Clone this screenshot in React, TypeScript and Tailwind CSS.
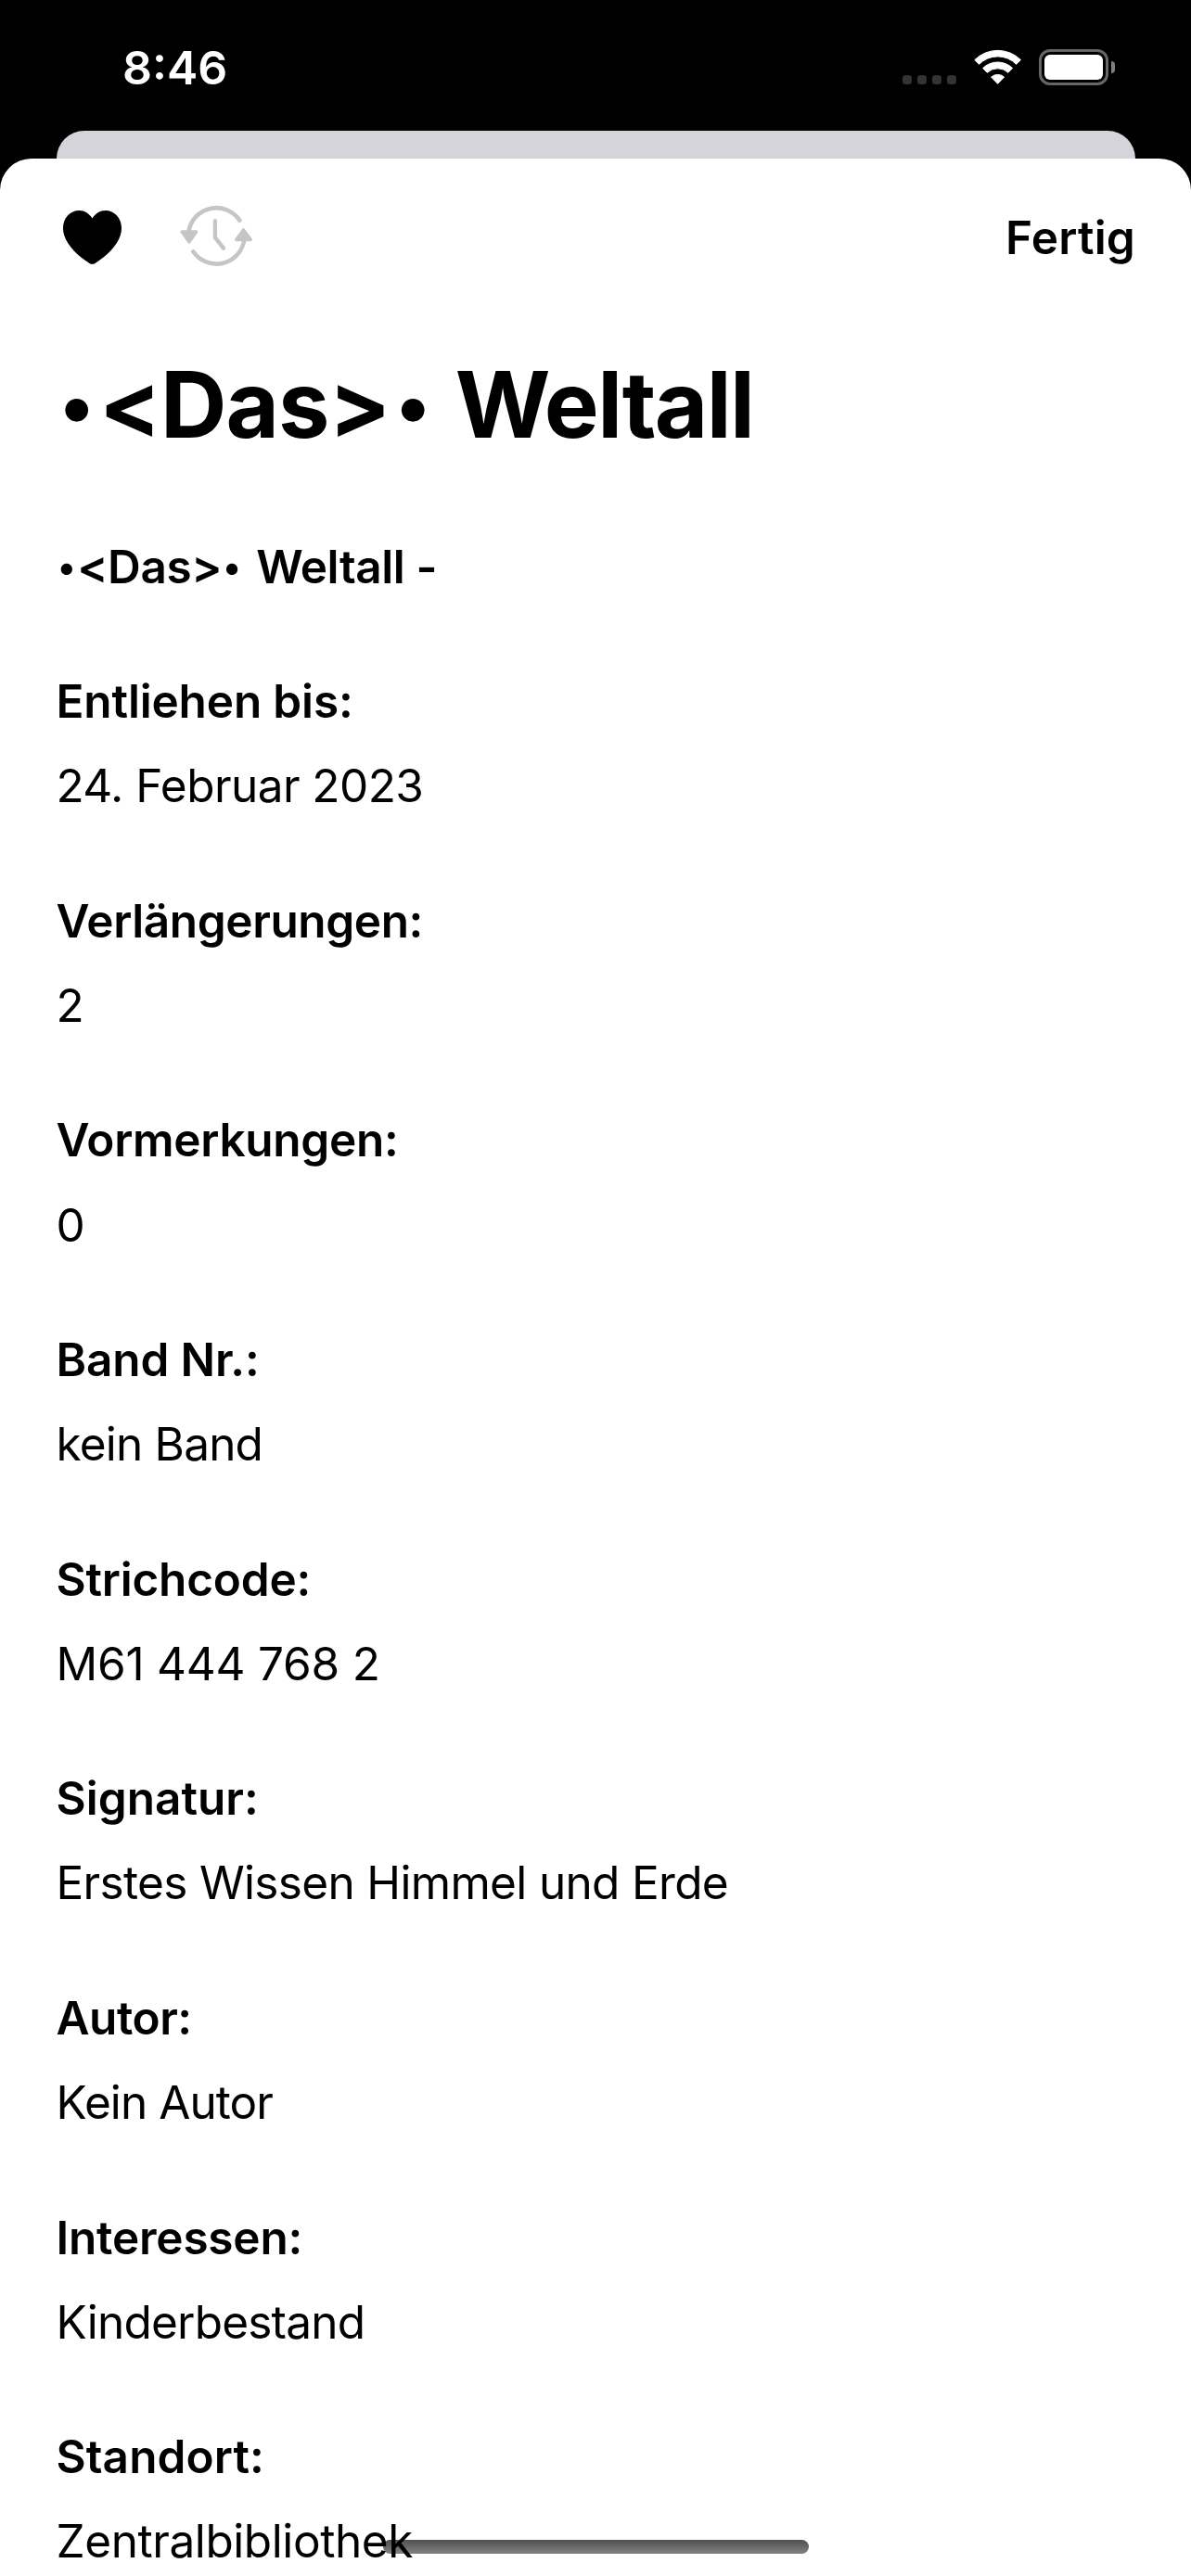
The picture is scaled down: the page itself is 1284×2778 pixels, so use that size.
type Entry = {
  label: string;
  value: string;
  labelClass: string;
  valueClass: string;
};

const entries: Entry[] = [
  { label: "Entliehen bis:", value: "24. Februar 2023", labelClass: "tracking-[-0.15px]", valueClass: "tracking-[-0.56px]" },
  { label: "Verlängerungen:", value: "2", labelClass: "tracking-[-0.39px]", valueClass: "tracking-normal" },
  { label: "Vormerkungen:", value: "0", labelClass: "tracking-[-0.3px]", valueClass: "tracking-normal" },
  { label: "Band Nr.:", value: "kein Band", labelClass: "tracking-[-0.15px]", valueClass: "tracking-[-0.8px]" },
  { label: "Strichcode:", value: "M61 444 768 2", labelClass: "tracking-[-0.2px]", valueClass: "tracking-[-0.22px]" },
  { label: "Signatur:", value: "Erstes Wissen Himmel und Erde", labelClass: "tracking-[0.02px]", valueClass: "tracking-[-0.67px]" },
  { label: "Autor:", value: "Kein Autor", labelClass: "tracking-[-0.45px]", valueClass: "tracking-[-0.92px]" },
  { label: "Interessen:", value: "Kinderbestand", labelClass: "tracking-[-0.2px]", valueClass: "tracking-[-0.78px]" },
  { label: "Standort:", value: "Zentralbibliothek", labelClass: "tracking-[0.1px]", valueClass: "tracking-[-0.42px]" },
];

function WifiIcon() {
  return (
    <svg
      className="h-[39px] w-[53px]"
      viewBox="1049 53 53 39"
      fill="#fff"
      stroke="#fff"
      strokeWidth="1"
      strokeLinejoin="round"
    >
      <path d="M1050.8 64.6A35.2 35.2 0 0 1 1100.4 64.6L1095.6 69.3A28 28 0 0 0 1055.6 69.3Z" />
      <path d="M1059.6 73.5A23 23 0 0 1 1091.6 73.5L1086.9 78.3A16.4 16.4 0 0 0 1064.3 78.3Z" />
      <path d="M1068.6 83.1A10.4 10.4 0 0 1 1082.6 83.1L1075.6 90.3Z" />
    </svg>
  );
}

function Battery() {
  return (
    <div className="flex items-center gap-[3px]">
      <div className="h-[39px] w-[75px] rounded-[12px] border-[3px] border-[#666] p-[3px]">
        <div className="h-full w-full rounded-[6px] bg-white" />
      </div>
      <div className="h-[13px] w-[4px] rounded-r-full bg-[#808080]" />
    </div>
  );
}

function StatusBar() {
  return (
    <header className="flex h-[141px] shrink-0 items-start justify-between pr-[82px] pl-[132px] text-white">
      <time className="mt-[43px] text-[50px] leading-[60px] font-semibold">8:46</time>
      <div className="mt-[53px] flex h-[39px] items-end">
        <div className="mb-px flex gap-1.5">
          {[0, 1, 2, 3].map((dot) => (
            <span key={dot} className="size-[10px] rounded-[3.5px] bg-[#333]" />
          ))}
        </div>
        <div className="ml-[18px]">
          <WifiIcon />
        </div>
        <div className="ml-[18px]">
          <Battery />
        </div>
      </div>
    </header>
  );
}

function HeartIcon() {
  return (
    <svg className="h-[60px] w-[65px]" viewBox="67 226 65 60" fill="#000">
      <path d="M99.5 235.6C96 230 91.2 227 85.5 227C75.3 227 68 235.2 68 246C68 260.500 81 274 96.5 284Q99.5 285.7 102.5 284C118 274 131 260.500 131 246C131 235.2 123.7 227 113.5 227C107.8 227 103 230 99.5 235.6Z" />
    </svg>
  );
}

function RenewIcon() {
  return (
    <svg
      className="h-[68px] w-[80px]"
      viewBox="193 221 80 68"
      fill="none"
      stroke="#c5c5c7"
      strokeWidth="4.6"
      strokeLinecap="round"
      strokeLinejoin="round"
    >
      <path d="M258.3 237.6A30.2 30.2 0 0 0 203.3 250" />
      <path d="M208.3 271.3A30.2 30.2 0 0 0 263.2 259" />
      <path d="M231.9 238.2V256.2L240.9 267.7" strokeWidth="4.4" />
      <path d="M196.3 250H211.5L203.9 260.7Z" fill="#c5c5c7" strokeWidth="3.6" />
      <path d="M254.9 258.4H270.1L262.5 248Z" fill="#c5c5c7" strokeWidth="3.6" />
    </svg>
  );
}

export default function App() {
  return (
    <div className="relative flex h-[2778px] w-[1284px] flex-col overflow-hidden bg-black font-['Inter',sans-serif] text-black">
      <StatusBar />
      <div className="mx-[60.5px] h-[30px] shrink-0 rounded-t-[30px] bg-[#d5d4da]" />

      <main className="flex-1 rounded-t-[34px] bg-white px-[60px]">
        <div className="flex h-[205px] items-start justify-between">
          <div className="mt-[50px] flex items-start">
            <button className="mt-[5px] ml-[7px]" aria-label="Merken">
              <HeartIcon />
            </button>
            <button className="ml-[61px]" aria-label="Verlängern">
              <RenewIcon />
            </button>
          </div>
          <button className="mt-[55px] text-[49.5px] leading-[60px] font-semibold tracking-[0.2px]">
            Fertig
          </button>
        </div>

        <h1 className="h-[120px] pl-1 text-[99px] leading-[120px] font-bold whitespace-nowrap">
          <span className="relative -top-[7px] mr-[5.3px] text-[79px] leading-none">•</span>
          <span className="tracking-[-1px]">&lt;Das&gt;</span>
          <span className="relative -top-[7px] ml-1.5 text-[79px] leading-none">•</span>{" "}
          <span className="ml-[3.2px] tracking-[-1.65px]">Weltall</span>
        </h1>
        <p className="mt-[85px] h-[60px] pl-0.5 text-[49.5px] leading-[60px] font-semibold whitespace-nowrap">
          <span className="relative -top-1 mr-[1.5px] text-[39px] leading-none">•</span>
          <span className="tracking-[-0.4px]">&lt;Das&gt;</span>
          <span className="relative -top-1 ml-px text-[39px] leading-none">•</span>{" "}
          <span className="ml-[3.9px] tracking-[-0.4px]">Weltall -</span>
        </p>

        <dl className="mt-[85px] flex flex-col gap-[85.47px] pl-[0.5px] text-[49.5px] leading-[60px]">
          {entries.map((entry) => (
            <div key={entry.label} className="flex flex-col gap-[31.2px] whitespace-nowrap">
              <dt className={`h-[60px] font-semibold ${entry.labelClass}`}>{entry.label}</dt>
              <dd className={`h-[60px] ${entry.valueClass}`}>{entry.value}</dd>
            </div>
          ))}
        </dl>
      </main>

      <div className="absolute bottom-6 left-[413px] h-[15px] w-[459px] rounded-full bg-linear-to-b from-[#505050] to-[#828282] mix-blend-multiply" />
    </div>
  );
}
